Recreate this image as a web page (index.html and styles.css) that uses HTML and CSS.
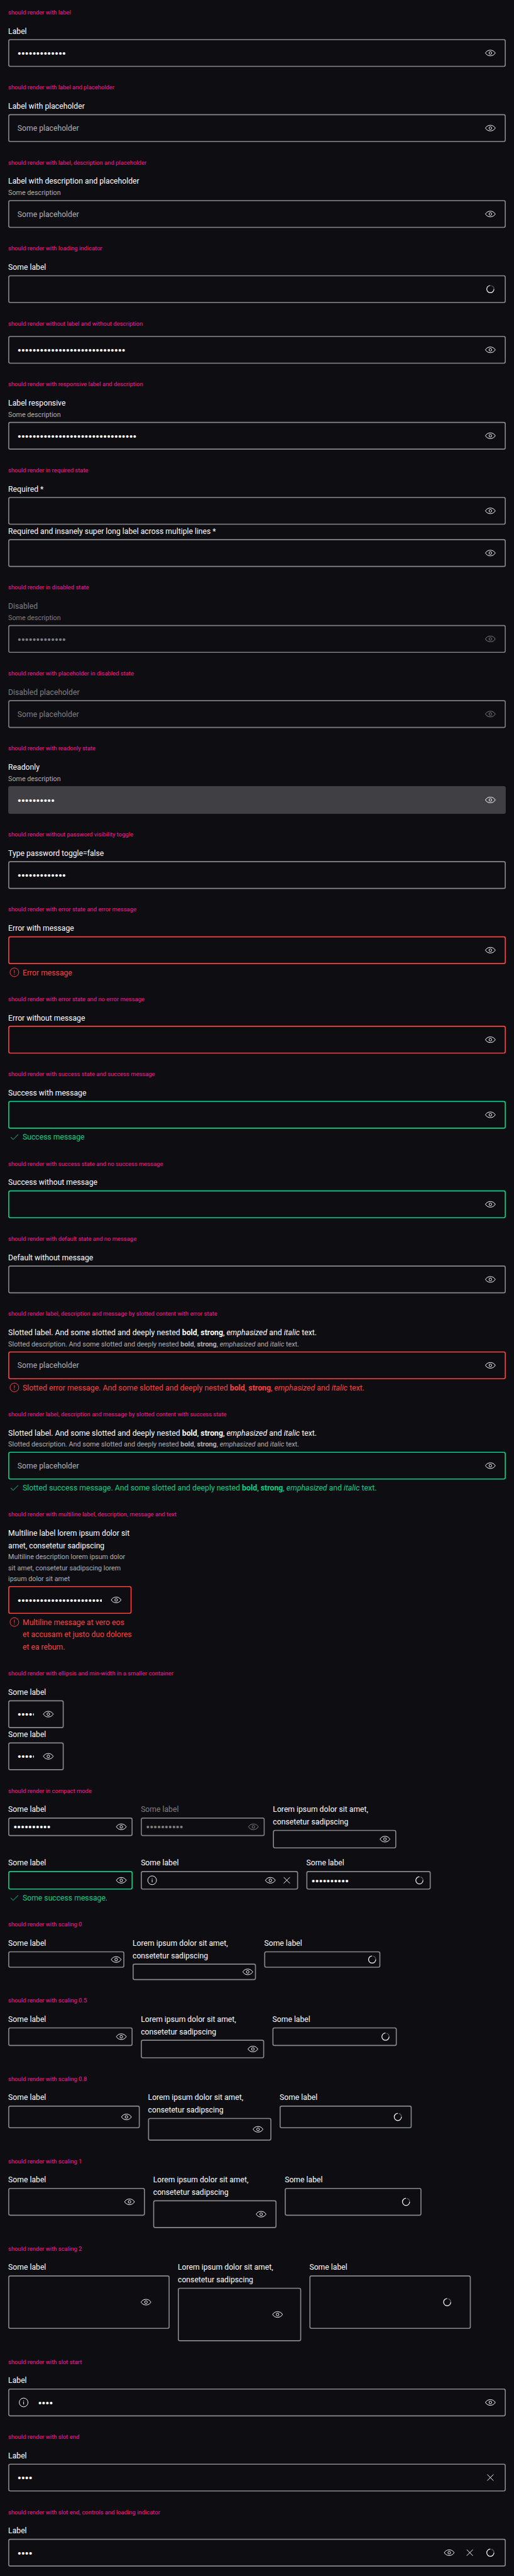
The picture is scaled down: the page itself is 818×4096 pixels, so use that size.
FILE: index.html
```html
<!DOCTYPE html>
<html lang="en">
<head>
<meta charset="utf-8">
<title>Text field password</title>
<link rel="stylesheet" href="styles.css">
</head>
<body>
<svg class="sprite" width="0" height="0" aria-hidden="true">
  <symbol id="eye" viewBox="0 0 24 24"><path d="M2.400 12C4.600 8.200 8.100 6.500 12 6.500s7.400 1.700 9.600 5.500c-2.200 3.800-5.700 5.500-9.600 5.500S4.600 15.800 2.400 12z"/><circle cx="12" cy="12" r="2.600"/></symbol>
  <symbol id="close" viewBox="0 0 24 24"><path d="M6 6l12 12M18 6L6 18"/></symbol>
  <symbol id="info" viewBox="0 0 24 24"><circle cx="12" cy="12" r="8.500"/><path d="M12 10.500V16M12 8v1.200"/></symbol>
  <symbol id="error" viewBox="0 0 24 24"><circle cx="12" cy="12" r="8.500"/><path d="M12 7.500v6M12 15v1.500"/></symbol>
  <symbol id="check" viewBox="0 0 24 24"><path d="M5 12.300l4.500 4.700L19.400 7.200"/></symbol>
  <symbol id="spin" viewBox="0 0 24 24"><path d="M14 5.300A7 7 0 0 1 19 12" opacity=".35"/><path d="M19 12A7 7 0 1 1 12 5"/></symbol>
</svg>
<div class="frame">
<main class="page">
  <section class="case"><h2>should render with label</h2>
    <div class="field"><label>Label</label><div class="box"><span class="dots">•••••••••••••</span><svg><use href="#eye"/></svg></div></div></section>
  <section class="case"><h2>should render with label and placeholder</h2>
    <div class="field"><label>Label with placeholder</label><div class="box"><span class="hint">Some placeholder</span><svg><use href="#eye"/></svg></div></div></section>
  <section class="case"><h2>should render with label, description and placeholder</h2>
    <div class="field"><label>Label with description and placeholder</label><p class="desc">Some description</p><div class="box"><span class="hint">Some placeholder</span><svg><use href="#eye"/></svg></div></div></section>
  <section class="case"><h2>should render with loading indicator</h2>
    <div class="field"><label>Some label</label><div class="box"><span class="dots"></span><svg class="spin"><use href="#spin"/></svg></div></div></section>
  <section class="case"><h2>should render without label and without description</h2>
    <div class="field bare"><div class="box"><span class="dots">•••••••••••••••••••••••••••••</span><svg><use href="#eye"/></svg></div></div></section>
  <section class="case"><h2>should render with responsive label and description</h2>
    <div class="field"><label>Label responsive</label><p class="desc">Some description</p><div class="box"><span class="dots">••••••••••••••••••••••••••••••••</span><svg><use href="#eye"/></svg></div></div></section>
  <section class="case"><h2>should render in required state</h2>
    <div class="field"><label>Required *</label><div class="box"><span class="dots"></span><svg><use href="#eye"/></svg></div></div>
    <div class="field"><label>Required and insanely super long label across multiple lines *</label><div class="box"><span class="dots"></span><svg><use href="#eye"/></svg></div></div></section>
  <section class="case"><h2>should render in disabled state</h2>
    <div class="field disabled"><label>Disabled</label><p class="desc">Some description</p><div class="box"><span class="dots">•••••••••••••</span><svg><use href="#eye"/></svg></div></div></section>
  <section class="case"><h2>should render with placeholder in disabled state</h2>
    <div class="field disabled"><label>Disabled placeholder</label><div class="box"><span class="hint">Some placeholder</span><svg><use href="#eye"/></svg></div></div></section>
  <section class="case"><h2>should render with readonly state</h2>
    <div class="field readonly"><label>Readonly</label><p class="desc">Some description</p><div class="box"><span class="dots">••••••••••</span><svg><use href="#eye"/></svg></div></div></section>
  <section class="case"><h2>should render without password visibility toggle</h2>
    <div class="field"><label>Type password toggle=false</label><div class="box"><span class="dots">•••••••••••••</span></div></div></section>
  <section class="case"><h2>should render with error state and error message</h2>
    <div class="field error"><label>Error with message</label><div class="box"><span class="dots"></span><svg><use href="#eye"/></svg></div><div class="msg"><svg><use href="#error"/></svg><p>Error message</p></div></div></section>
  <section class="case"><h2>should render with error state and no error message</h2>
    <div class="field error"><label>Error without message</label><div class="box"><span class="dots"></span><svg><use href="#eye"/></svg></div></div></section>
  <section class="case"><h2>should render with success state and success message</h2>
    <div class="field success"><label>Success with message</label><div class="box"><span class="dots"></span><svg><use href="#eye"/></svg></div><div class="msg"><svg><use href="#check"/></svg><p>Success message</p></div></div></section>
  <section class="case"><h2>should render with success state and no success message</h2>
    <div class="field success"><label>Success without message</label><div class="box"><span class="dots"></span><svg><use href="#eye"/></svg></div></div></section>
  <section class="case"><h2>should render with default state and no message</h2>
    <div class="field"><label>Default without message</label><div class="box"><span class="dots"></span><svg><use href="#eye"/></svg></div></div></section>
  <section class="case"><h2>should render label, description and message by slotted content with error state</h2>
    <div class="field error slotted"><label>Slotted label. And some slotted and deeply nested <b>bold</b>, <strong>strong</strong>, <em>emphasized</em> and <i>italic</i> text.</label><p class="desc">Slotted description. And some slotted and deeply nested <b>bold</b>, <strong>strong</strong>, <em>emphasized</em> and <i>italic</i> text.</p><div class="box"><span class="hint">Some placeholder</span><svg><use href="#eye"/></svg></div><div class="msg"><svg><use href="#error"/></svg><p>Slotted error message. And some slotted and deeply nested <b>bold</b>, <strong>strong</strong>, <em>emphasized</em> and <i>italic</i> text.</p></div></div></section>
  <section class="case"><h2>should render label, description and message by slotted content with success state</h2>
    <div class="field success slotted"><label>Slotted label. And some slotted and deeply nested <b>bold</b>, <strong>strong</strong>, <em>emphasized</em> and <i>italic</i> text.</label><p class="desc">Slotted description. And some slotted and deeply nested <b>bold</b>, <strong>strong</strong>, <em>emphasized</em> and <i>italic</i> text.</p><div class="box"><span class="hint">Some placeholder</span><svg><use href="#eye"/></svg></div><div class="msg"><svg><use href="#check"/></svg><p>Slotted success message. And some slotted and deeply nested <b>bold</b>, <strong>strong</strong>, <em>emphasized</em> and <i>italic</i> text.</p></div></div></section>
  <section class="case"><h2>should render with multiline label, description, message and text</h2>
    <div class="field error w240"><label>Multiline label lorem ipsum dolor sit<br>amet, consetetur sadipscing</label><p class="desc">Multiline description lorem ipsum dolor<br>sit amet, consetetur sadipscing lorem<br>ipsum dolor sit amet</p><div class="box"><span class="dots">•••••••••••••••••••••••</span><svg><use href="#eye"/></svg></div><div class="msg"><svg><use href="#error"/></svg><p>Multiline message at vero eos<br>et accusam et justo duo dolores<br>et ea rebum.</p></div></div></section>
  <section class="case"><h2>should render with ellipsis and min-width in a smaller container</h2>
    <div class="field tiny"><label>Some label</label><div class="box"><span class="dots">•••••</span><svg><use href="#eye"/></svg></div></div>
    <div class="field tiny"><label>Some label</label><div class="box"><span class="dots">•••••</span><svg><use href="#eye"/></svg></div></div></section>
  <section class="case"><h2>should render in compact mode</h2>
    <div class="row compact">
      <div class="field"><label>Some label</label><div class="box"><span class="dots">••••••••••</span><svg><use href="#eye"/></svg></div></div>
      <div class="field disabled w241"><label>Some label</label><div class="box"><span class="dots">••••••••••</span><svg><use href="#eye"/></svg></div></div>
      <div class="field w240"><label>Lorem ipsum dolor sit amet,<br>consetetur sadipscing</label><div class="box"><span class="dots"></span><svg><use href="#eye"/></svg></div></div>
    </div>
    <div class="row compact second">
      <div class="field success"><label>Some label</label><div class="box"><span class="dots"></span><svg><use href="#eye"/></svg></div><div class="msg"><svg><use href="#check"/></svg><p>Some success message.</p></div></div>
      <div class="field w306"><label>Some label</label><div class="box"><svg><use href="#info"/></svg><span class="dots"></span><svg><use href="#eye"/></svg><svg><use href="#close"/></svg></div></div>
      <div class="field"><label>Some label</label><div class="box"><span class="dots">••••••••••</span><svg class="spin"><use href="#spin"/></svg></div></div>
    </div></section>
  <section class="case"><h2>should render with scaling 0</h2>
    <div class="row s0">
      <div class="field"><label>Some label</label><div class="box"><span class="dots"></span><svg><use href="#eye"/></svg></div></div>
      <div class="field w240"><label>Lorem ipsum dolor sit amet,<br>consetetur sadipscing</label><div class="box"><span class="dots"></span><svg><use href="#eye"/></svg></div></div>
      <div class="field"><label>Some label</label><div class="box"><span class="dots"></span><svg class="spin"><use href="#spin"/></svg></div></div>
    </div></section>
  <section class="case"><h2>should render with scaling 0.5</h2>
    <div class="row compact">
      <div class="field"><label>Some label</label><div class="box"><span class="dots"></span><svg><use href="#eye"/></svg></div></div>
      <div class="field w240"><label>Lorem ipsum dolor sit amet,<br>consetetur sadipscing</label><div class="box"><span class="dots"></span><svg><use href="#eye"/></svg></div></div>
      <div class="field"><label>Some label</label><div class="box"><span class="dots"></span><svg class="spin"><use href="#spin"/></svg></div></div>
    </div></section>
  <section class="case"><h2>should render with scaling 0.8</h2>
    <div class="row s08">
      <div class="field"><label>Some label</label><div class="box"><span class="dots"></span><svg><use href="#eye"/></svg></div></div>
      <div class="field w240"><label>Lorem ipsum dolor sit amet,<br>consetetur sadipscing</label><div class="box"><span class="dots"></span><svg><use href="#eye"/></svg></div></div>
      <div class="field"><label>Some label</label><div class="box"><span class="dots"></span><svg class="spin"><use href="#spin"/></svg></div></div>
    </div></section>
  <section class="case"><h2>should render with scaling 1</h2>
    <div class="row s1">
      <div class="field"><label>Some label</label><div class="box"><span class="dots"></span><svg><use href="#eye"/></svg></div></div>
      <div class="field w240"><label>Lorem ipsum dolor sit amet,<br>consetetur sadipscing</label><div class="box"><span class="dots"></span><svg><use href="#eye"/></svg></div></div>
      <div class="field"><label>Some label</label><div class="box"><span class="dots"></span><svg class="spin"><use href="#spin"/></svg></div></div>
    </div></section>
  <section class="case"><h2>should render with scaling 2</h2>
    <div class="row s2">
      <div class="field"><label>Some label</label><div class="box"><span class="dots"></span><svg><use href="#eye"/></svg></div></div>
      <div class="field w240"><label>Lorem ipsum dolor sit amet,<br>consetetur sadipscing</label><div class="box"><span class="dots"></span><svg><use href="#eye"/></svg></div></div>
      <div class="field"><label>Some label</label><div class="box"><span class="dots"></span><svg class="spin"><use href="#spin"/></svg></div></div>
    </div></section>
  <section class="case"><h2>should render with slot start</h2>
    <div class="field"><label>Label</label><div class="box"><svg><use href="#info"/></svg><span class="dots">••••</span><svg><use href="#eye"/></svg></div></div></section>
  <section class="case"><h2>should render with slot end</h2>
    <div class="field"><label>Label</label><div class="box"><span class="dots">••••</span><svg><use href="#close"/></svg></div></div></section>
  <section class="case"><h2>should render with slot end, controls and loading indicator</h2>
    <div class="field"><label>Label</label><div class="box"><span class="dots">••••</span><svg><use href="#eye"/></svg><svg><use href="#close"/></svg><svg class="spin"><use href="#spin"/></svg></div></div></section>
</main>
</div>
</body>
</html>
```
FILE: styles.css
```css
* { box-sizing: border-box; margin: 0; padding: 0; }

html { background: #0e0e12; }

body {
  background: #0e0e12;
  color: #fbfcff;
  font-family: Roboto, "Liberation Sans", sans-serif;
  font-size: 16.5px;
  line-height: 24px;
}

.sprite { display: none; }

.frame {
  width: 818px;
  height: 4096px;
  overflow: hidden;
}

.page {
  width: 1000px;
  padding: 16px;
  display: flex;
  flex-direction: column;
  gap: 32px;
  transform: scale(0.818);
  transform-origin: 0 0;
  white-space: nowrap;
}

/* condensed text */
h2, label, .desc, .hint, .msg p { transform-origin: 0 50%; }

h2 {
  height: 16px;
  margin-bottom: 16px;
  color: #ff1493;
  font-size: 12.2px;
  font-weight: 400;
  line-height: 16px;
  transform: scaleX(0.945);
}

.field {
  --edge: #88898c;
  --inset: 16px;
  --gap: 16px;
  --height: 54px;
  --squeeze: 0.903;
  display: flex;
  flex-direction: column;
}

.slotted { --squeeze: 0.913; }

label {
  display: block;
  transform: translateY(0.5px) scaleX(var(--squeeze));
}

.desc {
  color: #afb0b3;
  font-size: 14.4px;
  line-height: 21px;
  transform: scaleX(calc(var(--squeeze) + 0.008));
}

.box {
  display: flex;
  align-items: center;
  gap: var(--gap);
  height: var(--height);
  margin-top: 4px;
  padding: 0 var(--inset);
  border: 2px solid var(--edge);
  border-radius: 4px;
}

.bare .box { margin-top: 0; }

.dots,
.hint {
  flex: 1;
  min-width: 0;
}

.dots {
  overflow: hidden;
  padding: 2px 0 0 0.5px;
  font-family: "Liberation Sans", Arial, sans-serif;
  font-size: 18px;
  letter-spacing: 0.94px;
}

.hint {
  color: #afb0b3;
  transform: translateY(0.5px) scaleX(0.903);
}

svg {
  flex: none;
  width: 24px;
  height: 24px;
  fill: none;
  stroke: currentColor;
  stroke-width: 1.2;
}

.spin { stroke-width: 1.5; }

.msg {
  display: flex;
  gap: 4px;
  margin-top: 4px;
}

.msg p { transform: translateY(0.5px) scaleX(var(--squeeze)); }

.disabled { --edge: #7e7f82; }
.disabled label,
.disabled .desc,
.disabled .hint,
.disabled .box { color: #7e7f82; }

.readonly { --edge: #404044; }
.readonly .box { background: #404044; }

.error { --edge: #fc4040; }
.error .msg { color: #fc4040; }
.success { --edge: #09d087; }
.success .msg { color: #09d087; }

.row { display: flex; align-items: flex-start; gap: 16px; }
.row.second { margin-top: 16px; }

.compact .field { width: 242px; --height: 36px; --inset: 8px; --gap: 8px; }
.s0 .field { width: 226px; --height: 32px; --inset: 2px; --gap: 4px; }
.s08 .field { width: 256.4px; --height: 43.6px; --inset: 12.8px; --gap: 12.8px; }
.s1 .field { width: 266px; }
.s2 .field { width: 314px; --height: 104px; --inset: 32px; --gap: 32px; }

.row .field.w240, .w240 { width: 240px; }
.compact .field.w241 { width: 241px; }
.compact .field.w306 { width: 306px; }
.tiny { width: 108px; }
```
